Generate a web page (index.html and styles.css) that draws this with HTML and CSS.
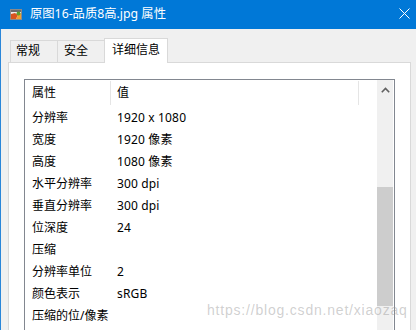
FILE: index.html
```html
<!DOCTYPE html>
<html>
<head>
<meta charset="utf-8">
<link rel="stylesheet" href="styles.css">
</head>
<body>
<div class="window">
  <div class="titlebar">
    <svg class="app-icon" width="12" height="11" viewBox="0 0 12 11">
      <rect x="0.5" y="0.5" width="11" height="10" fill="#eeeeee" stroke="#8a8a8a"/>
      <rect x="1" y="1" width="10" height="2" fill="#6b6b6b"/>
      <polygon points="1,10 1,5 5,4 8,6 6,10" fill="#d9541e"/>
      <polygon points="6,10 8,6 11,4 11,10" fill="#f0a030"/>
      <circle cx="8.5" cy="4.5" r="2" fill="#5aa02c"/>
    </svg>
    <span class="title">原图16-品质8高.jpg 属性</span>
    <svg class="close" width="11" height="11" viewBox="0 0 11 11">
      <path d="M0.5 0.5 L10.5 10.5 M10.5 0.5 L0.5 10.5" stroke="#ffffff" stroke-width="1" fill="none"/>
    </svg>
  </div>
  <div class="client">
    <div class="tabs">
      <div class="tab t1">常规</div>
      <div class="tab t2">安全</div>
      <div class="tab active">详细信息</div>
    </div>
    <div class="panel">
      <div class="listbox">
        <div class="list">
          <div class="row header">
            <div class="hc1">属性</div>
            <div class="sep"></div>
            <div class="hc2">值</div>
            <div class="sep"></div>
          </div>
          <div class="row"><div class="c1">分辨率</div><div class="c2">1920 x 1080</div></div>
          <div class="row"><div class="c1">宽度</div><div class="c2">1920 像素</div></div>
          <div class="row"><div class="c1">高度</div><div class="c2">1080 像素</div></div>
          <div class="row"><div class="c1">水平分辨率</div><div class="c2">300 dpi</div></div>
          <div class="row"><div class="c1">垂直分辨率</div><div class="c2">300 dpi</div></div>
          <div class="row"><div class="c1">位深度</div><div class="c2">24</div></div>
          <div class="row"><div class="c1">压缩</div><div class="c2"></div></div>
          <div class="row"><div class="c1">分辨率单位</div><div class="c2">2</div></div>
          <div class="row"><div class="c1">颜色表示</div><div class="c2">sRGB</div></div>
          <div class="row"><div class="c1">压缩的位/像素</div><div class="c2"></div></div>
        </div>
        <div class="scrollbar">
          <div class="sb-btn">
            <svg width="9" height="6" viewBox="0 0 9 6">
              <path d="M0.8 5.2 L4.5 1.5 L8.2 5.2" stroke="#606060" stroke-width="1.6" fill="none"/>
            </svg>
          </div>
          <div class="sb-gap"></div>
          <div class="sb-thumb"></div>
          <div class="sb-rest"></div>
        </div>
      </div>
    </div>
  </div>
  <div class="watermark">https://blog.csdn.net/xiaozaq</div>
</div>
</body>
</html>
```
FILE: styles.css
```css
html, body {
  margin: 0;
  padding: 0;
}
body {
  background: #f0f0f0;
  font-family: "Noto Sans", "Noto Sans CJK SC", sans-serif;
  font-size: 12px;
  color: #000;
}
.window {
  position: relative;
  width: 416px;
  height: 330px;
  overflow: hidden;
  display: flex;
  flex-direction: column;
}
.titlebar {
  height: 29px;
  flex: none;
  background: #0078d7;
  color: #fff;
  display: flex;
  align-items: center;
}
.app-icon {
  margin-left: 10px;
  margin-top: -1px;
}
.title {
  margin-left: 8px;
  font-size: 12.3px;
  line-height: 16px;
  margin-top: -1px;
}
.close {
  margin-left: auto;
  margin-right: 6px;
  margin-top: -2px;
}
.client {
  flex: 1;
  display: flex;
  flex-direction: column;
  border-left: 1px solid #2a86d9;
  padding: 9px 0 0 7px;
  min-height: 0;
}
.tabs {
  display: flex;
  align-items: flex-end;
  padding-left: 2px;
  height: 25px;
  margin-bottom: -1px;
  position: relative;
  z-index: 1;
}
.tab {
  box-sizing: border-box;
  height: 22px;
  margin-bottom: 1px;
  border: 1px solid #d9d9d9;
  border-bottom: none;
  line-height: 20px;
  font-size: 12px;
  white-space: nowrap;
}
.t1 {
  width: 48px;
  padding-left: 5px;
}
.t2 {
  width: 48px;
  margin-left: -1px;
  padding-left: 6px;
}
.tab.active {
  width: 64px;
  margin-left: -1px;
  height: 25px;
  margin-bottom: 0;
  background: #fff;
  text-align: center;
  line-height: 21px;
  padding: 0;
}
.panel {
  box-sizing: border-box;
  width: 403px;
  flex: 1;
  background: #fff;
  border: 1px solid #d9d9d9;
  padding: 16px 15px 0 15px;
}
.listbox {
  border: 1px solid #828790;
  height: 300px;
  display: flex;
}
.list {
  flex: 1;
  display: flex;
  flex-direction: column;
}
.row {
  display: flex;
  align-items: center;
  height: 22px;
  line-height: 16px;
  white-space: nowrap;
}
.row.header {
  height: 26px;
  margin-bottom: 1px;
}
.hc1 {
  width: 78px;
  padding-left: 7px;
}
.hc2 {
  width: 241px;
  padding-left: 6px;
}
.sep {
  width: 1px;
  height: 24px;
  background: #e5e5e5;
}
.c1 {
  width: 79px;
  padding-left: 7px;
}
.c2 {
  padding-left: 6px;
  letter-spacing: 0.15px;
}
.scrollbar {
  width: 16px;
  margin-right: 1px;
  background: #f0f0f0;
  display: flex;
  flex-direction: column;
}
.sb-btn {
  height: 20px;
  display: flex;
  align-items: center;
  justify-content: center;
}
.sb-gap {
  height: 87px;
}
.sb-thumb {
  height: 119px;
  background: #cdcdcd;
}
.sb-rest {
  flex: 1;
}
.watermark {
  position: absolute;
  left: 207px;
  top: 302px;
  font-family: "Liberation Sans", Arial, sans-serif;
  font-size: 14px;
  line-height: 16px;
  letter-spacing: 0.8px;
  color: rgba(150, 150, 150, 0.45);
  white-space: nowrap;
}
```
